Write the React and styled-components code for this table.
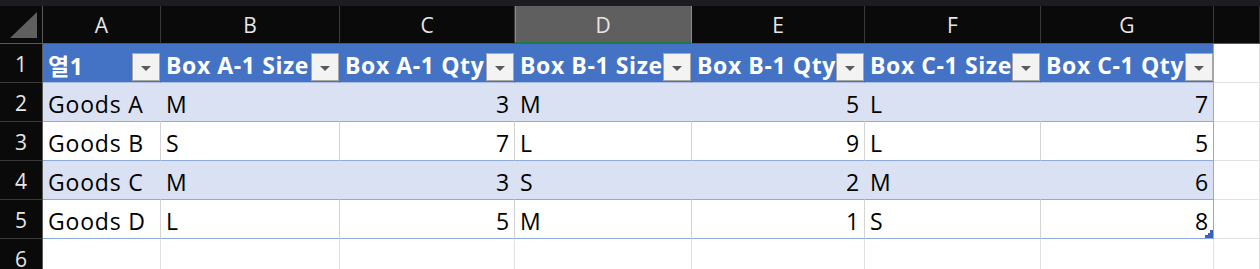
import React from "react";
import styled, { createGlobalStyle, css } from "styled-components";

const Global = createGlobalStyle`
  html, body { margin: 0; padding: 0; background: #ffffff; }
  body { font-family: "Open Sans", "Noto Sans CJK KR", sans-serif; overflow: hidden; }
  * { box-sizing: border-box; }
`;

const TRACKS = "43px 118px 179px 175px 177px 173px 176px 173px 1fr";

const Sheet = styled.div`
  width: 1260px;
  height: 269px;
  overflow: hidden;
  background: #ffffff;
  position: relative;
`;

const TopStrip = styled.div`
  height: 6px;
  background: #1b1d23;
`;

const Row = styled.div`
  display: grid;
  grid-template-columns: ${TRACKS};
  height: ${(p) => p.$h || 39}px;
`;

const Corner = styled.div`
  background: #0a0a0a;
  border-right: 1px solid #5a5a5a;
  border-bottom: 1px solid #5a5a5a;
  display: flex;
  align-items: flex-end;
  justify-content: flex-end;
  padding: 0 5px 5px 0;
`;

const CornerTriangle = styled.div`
  width: 27px;
  height: 26px;
  background: #5f5f5f;
  clip-path: polygon(100% 0, 100% 100%, 0 100%);
`;

const ColHead = styled.div`
  background: ${(p) => (p.$selected ? "#5f5f5f" : "#0a0a0a")};
  color: #e6e6e6;
  font-size: 21px;
  display: flex;
  align-items: center;
  justify-content: center;
  border-right: 1px solid ${(p) => (p.$selected ? "#8a8a8a" : "#3a3a3a")};
  border-bottom: ${(p) => (p.$selected ? "2px solid #1f7a46" : "1px solid #5a5a5a")};
  ${(p) =>
    p.$selected &&
    css`
      box-shadow: inset 1px 0 0 #8a8a8a;
    `}
  padding-top: 1px;
`;

const RowHead = styled.div`
  background: #0a0a0a;
  color: #e6e6e6;
  font-size: 21px;
  display: flex;
  align-items: center;
  justify-content: center;
  border-right: 1px solid #5a5a5a;
  border-bottom: 1px solid #3a3a3a;
  padding-top: 2px;
`;

const variants = {
  head: css`
    background: #4472c4;
    color: #ffffff;
    font-weight: 700;
    letter-spacing: 0.6px;
    border-bottom: 1px solid #a9bde6;
  `,
  band: css`
    background: #d9e1f2;
    color: #000;
    letter-spacing: 0.8px;
    border-bottom: 1px solid #8ea9db;
  `,
  plain: css`
    background: #ffffff;
    color: #000;
    letter-spacing: 0.8px;
    border-bottom: 1px solid #8ea9db;
  `,
};

const rightLine = (p) => {
  if (p.$last) return "#8ea9db";
  if (p.$v === "head") return "#4472c4";
  if (p.$v === "band") return "#d9e1f2";
  return "#d4d4d4";
};

const Cell = styled.div`
  ${(p) => variants[p.$v]}
  border-right: 1px solid ${rightLine};
  font-size: 23px;
  display: flex;
  align-items: center;
  justify-content: ${(p) => (p.$num ? "flex-end" : "space-between")};
  padding: 3px ${(p) => (p.$num ? 4 : 0)}px 0 5px;
  white-space: nowrap;
  overflow: hidden;
  position: relative;
`;

const Outside = styled.div`
  background: #ffffff;
  border-right: 1px solid #e1e1e1;
  border-bottom: 1px solid #e1e1e1;
`;

const FilterButton = styled.span`
  flex: none;
  width: 28px;
  height: 28px;
  align-self: flex-end;
  margin-bottom: 1px;
  background: #f3f3f3;
  border: 1px solid #a6a6a6;
  display: flex;
  align-items: center;
  justify-content: center;
  padding-top: 2px;
`;

const Arrow = styled.span`
  width: 0;
  height: 0;
  border-left: 5px solid transparent;
  border-right: 5px solid transparent;
  border-top: 5px solid #5a5a5a;
`;

const ResizeHandle = styled.svg`
  position: absolute;
  right: 0;
  bottom: 0;
`;

const letters = ["A", "B", "C", "D", "E", "F", "G"];
const headers = ["열1", "Box A-1 Size", "Box A-1 Qty", "Box B-1 Size", "Box B-1 Qty", "Box C-1 Size", "Box C-1 Qty"];
const data = [
  ["Goods A", "M", 3, "M", 5, "L", 7],
  ["Goods B", "S", 7, "L", 9, "L", 5],
  ["Goods C", "M", 3, "S", 2, "M", 6],
  ["Goods D", "L", 5, "M", 1, "S", 8],
];

export default function App() {
  return (
    <Sheet>
      <Global />
      <TopStrip />
      <Row $h={38}>
        <Corner>
          <CornerTriangle />
        </Corner>
        {letters.map((l) => (
          <ColHead key={l} $selected={l === "D"}>
            {l}
          </ColHead>
        ))}
        <ColHead />
      </Row>
      <Row>
        <RowHead>1</RowHead>
        {headers.map((h, i) => (
          <Cell key={h} $v="head" $last={i === 6}>
            <span>{h}</span>
            <FilterButton>
              <Arrow />
            </FilterButton>
          </Cell>
        ))}
        <Outside />
      </Row>
      {data.map((r, ri) => {
        const v = ri % 2 === 0 ? "band" : "plain";
        return (
          <Row key={ri}>
            <RowHead>{ri + 2}</RowHead>
            {r.map((c, ci) => (
              <Cell key={ci} $v={v} $num={typeof c === "number"} $last={ci === 6}>
                {c}
                {ri === 3 && ci === 6 && (
                  <ResizeHandle width="8" height="8" viewBox="0 0 8 8">
                    <polygon points="8,0 8,8 0,8 0,5 3,5 3,3 5,3 5,0" fill="#3f5fbf" />
                  </ResizeHandle>
                )}
              </Cell>
            ))}
            <Outside />
          </Row>
        );
      })}
      <Row>
        <RowHead>6</RowHead>
        {letters.map((l) => (
          <Outside key={l} />
        ))}
        <Outside />
      </Row>
    </Sheet>
  );
}
